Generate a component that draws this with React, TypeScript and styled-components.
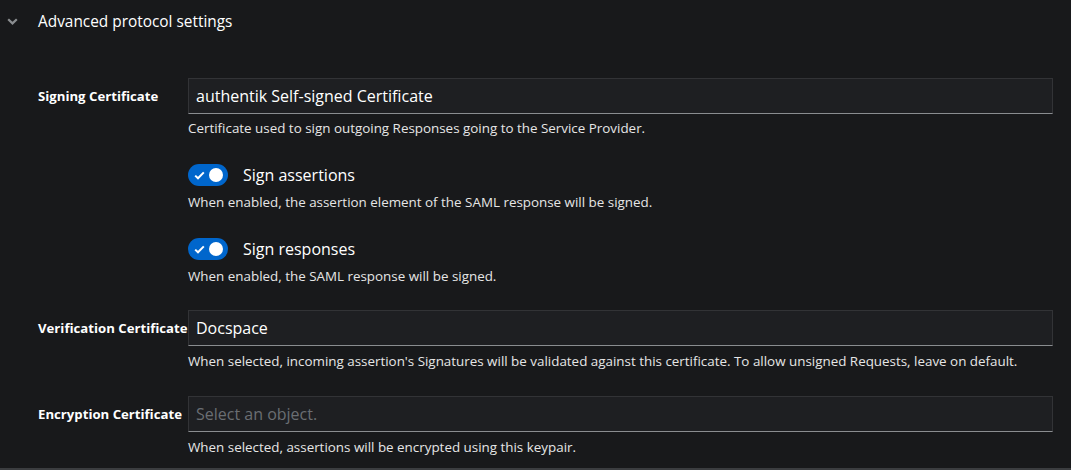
import React from 'react'
import styled, { createGlobalStyle } from 'styled-components'

const GlobalStyle = createGlobalStyle`
  html, body {
    margin: 0;
    padding: 0;
    background: #18191b;
  }
  body {
    font-family: 'Open Sans', 'Liberation Sans', Arial, sans-serif;
    color: #ffffff;
  }
`

const Section = styled.section`
  width: 1071px;
  height: 470px;
  box-sizing: border-box;
  background: #18191b;
  border-bottom: 2px solid #3b3d40;
  overflow: hidden;
`

const Toggle = styled.button`
  display: flex;
  align-items: center;
  height: 42px;
  padding: 0 0 0 6px;
  background: none;
  border: 0;
  color: #ffffff;
  font-family: inherit;
  font-size: 15.4px;
  cursor: pointer;
  gap: 20px;
`

const Chevron = styled.span`
  display: flex;
  width: 12px;
  justify-content: center;
  color: #8a8d90;
`

const Body = styled.div`
  padding: 36px 18px 0 38px;
  display: flex;
  flex-direction: column;
`

const FormRow = styled.div<{ $gap?: number }>`
  display: grid;
  grid-template-columns: 150px 1fr;
  margin-bottom: ${({ $gap }) => $gap ?? 0}px;
`

const Label = styled.label`
  font-size: 13.2px;
  font-weight: 700;
  height: 36px;
  display: flex;
  align-items: center;
  white-space: nowrap;
`

const Field = styled.div`
  display: flex;
  flex-direction: column;
`

const Input = styled.div<{ $placeholder?: boolean }>`
  height: 36px;
  box-sizing: border-box;
  background: #1e1f22;
  border: 1px solid #323336;
  border-bottom-color: #8a8d90;
  padding: 0 7px;
  display: flex;
  align-items: center;
  font-size: 16px;
  color: ${({ $placeholder }) => ($placeholder ? '#6a6e73' : '#ffffff')};
`

const Helper = styled.div<{ $mt?: number }>`
  font-size: 13.4px;
  color: #e6e6e6;
  line-height: 18px;
  margin-top: ${({ $mt }) => $mt ?? 6}px;
`

const SwitchLine = styled.div`
  display: flex;
  align-items: center;
  gap: 15px;
  height: 22px;
  font-size: 16px;
`

const Switch = styled.span<{ $on?: boolean }>`
  position: relative;
  width: 40px;
  height: 22px;
  border-radius: 11px;
  background: ${({ $on }) => ($on ? '#0066cc' : '#4f5255')};
  display: flex;
  align-items: center;
  flex-shrink: 0;

  &::after {
    content: '';
    position: absolute;
    top: 4px;
    left: ${({ $on }) => ($on ? '21px' : '4px')};
    width: 14px;
    height: 14px;
    border-radius: 50%;
    background: #ffffff;
  }
`

const Check = styled.svg`
  margin-left: 6px;
`

function SwitchField({ label, help }: { label: string; help: string }) {
  return (
    <Field>
      <SwitchLine>
        <Switch $on>
          <Check width="11" height="9" viewBox="0 0 11 9">
            <path d="M1.2 4.6 L4 7.3 L9.8 1.4" stroke="#fff" strokeWidth="2" fill="none" />
          </Check>
        </Switch>
        {label}
      </SwitchLine>
      <Helper $mt={7}>{help}</Helper>
    </Field>
  )
}

const App: React.FC = () => {
  return (
    <>
      <GlobalStyle />
      <Section>
        <Toggle>
          <Chevron>
            <svg width="11" height="7" viewBox="0 0 11 7">
              <path d="M1.2 1.2 L5.5 5.4 L9.8 1.2" stroke="#8a8d90" strokeWidth="2.2" fill="none" />
            </svg>
          </Chevron>
          Advanced protocol settings
        </Toggle>
        <Body>
          <FormRow $gap={27}>
            <Label>Signing Certificate</Label>
            <Field>
              <Input>authentik Self-signed Certificate</Input>
              <Helper $mt={5}>Certificate used to sign outgoing Responses going to the Service Provider.</Helper>
            </Field>
          </FormRow>
          <FormRow $gap={27}>
            <span />
            <SwitchField
              label="Sign assertions"
              help="When enabled, the assertion element of the SAML response will be signed."
            />
          </FormRow>
          <FormRow $gap={25}>
            <span />
            <SwitchField label="Sign responses" help="When enabled, the SAML response will be signed." />
          </FormRow>
          <FormRow $gap={26}>
            <Label>Verification Certificate</Label>
            <Field>
              <Input>Docspace</Input>
              <Helper>
                When selected, incoming assertion's Signatures will be validated against this certificate. To allow
                unsigned Requests, leave on default.
              </Helper>
            </Field>
          </FormRow>
          <FormRow>
            <Label>Encryption Certificate</Label>
            <Field>
              <Input $placeholder>Select an object.</Input>
              <Helper $mt={6}>When selected, assertions will be encrypted using this keypair.</Helper>
            </Field>
          </FormRow>
        </Body>
      </Section>
    </>
  )
}

export default App
